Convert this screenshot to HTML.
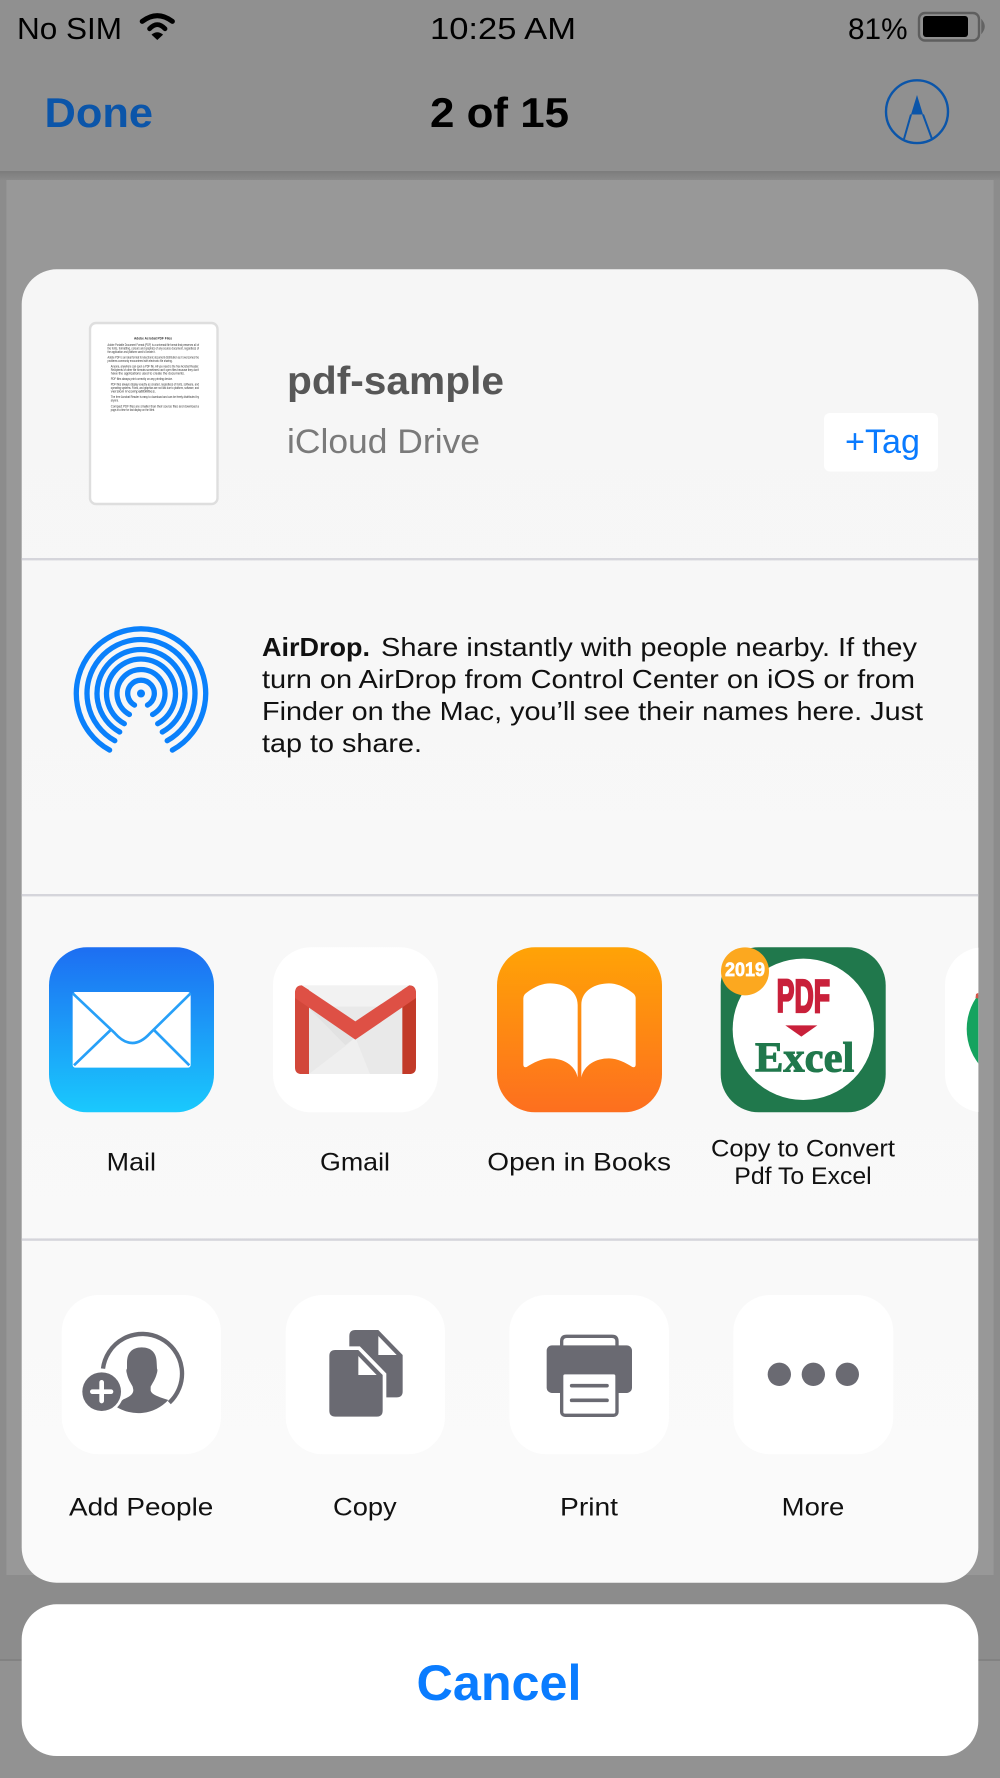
<!DOCTYPE html>
<html><head><meta charset="utf-8"><title>Share sheet</title>
<style>
html,body{margin:0;padding:0;background:#8c8c8c;width:1000px;height:1778px;overflow:hidden}
svg{display:block}
text{font-family:"Liberation Sans",sans-serif}
</style></head><body>
<svg width="1000" height="1778" viewBox="0 0 1000 1778" xmlns="http://www.w3.org/2000/svg">
<defs>
<linearGradient id="mailG" x1="0" y1="0" x2="0" y2="1"><stop offset="0" stop-color="#1d6ef2"/><stop offset="1" stop-color="#1ac9fd"/></linearGradient>
<linearGradient id="bookG" x1="0" y1="0" x2="0" y2="1"><stop offset="0" stop-color="#ffa306"/><stop offset="1" stop-color="#fd6f1f"/></linearGradient>
<linearGradient id="sheetG" x1="0" y1="0" x2="0" y2="1"><stop offset="0" stop-color="#f6f6f6"/><stop offset=".3" stop-color="#f7f7f7"/><stop offset="1" stop-color="#fafafa"/></linearGradient>
<linearGradient id="navS" x1="0" y1="0" x2="0" y2="1"><stop offset="0" stop-color="#7c7c7c"/><stop offset="1" stop-color="#8a8a8a"/></linearGradient>
<clipPath id="sheetClip"><rect x="21.7" y="269.3" width="956.6" height="1313.4" rx="35"/></clipPath>
</defs>

<!-- backdrop -->
<rect width="1000" height="1778" fill="#8c8c8c"/>
<rect width="1000" height="171" fill="#909090"/>
<rect y="171" width="1000" height="9" fill="url(#navS)"/>
<rect x="6.4" y="180" width="987.2" height="1395" fill="#989898"/>
<rect y="1660" width="1000" height="118" fill="#929292"/>
<rect y="1659" width="1000" height="2" fill="#828282"/>

<!-- status bar -->
<text x="17" y="39" font-size="30.5" fill="#000" textLength="105" lengthAdjust="spacingAndGlyphs">No SIM</text>
<path d="M142.2,21.4 Q157.3,10 172.4,21.4" fill="none" stroke="#000" stroke-width="5" stroke-linecap="round"/>
<path d="M149.6,28.8 Q157.3,20.5 165,28.8" fill="none" stroke="#000" stroke-width="4.8" stroke-linecap="round"/>
<path d="M151.5,34.6 Q157.3,29.8 163.1,34.6 L157.3,40 Z" fill="#000"/>
<text x="430" y="39" font-size="30.5" fill="#000" textLength="146" lengthAdjust="spacingAndGlyphs">10:25 AM</text>
<text x="848" y="39" font-size="30" fill="#000" textLength="59.5" lengthAdjust="spacingAndGlyphs">81%</text>
<rect x="919" y="13" width="60" height="27.5" rx="6" fill="none" stroke="#5e5e5e" stroke-width="2.4"/>
<rect x="923" y="16" width="45" height="21" rx="3" fill="#000"/>
<path d="M982,21 Q986,26.5 982,32 Z" fill="#636363" stroke="#636363" stroke-width="1.5"/>

<!-- nav bar -->
<text x="44.5" y="127" font-size="42" font-weight="bold" fill="#0b55a9" textLength="108.5" lengthAdjust="spacingAndGlyphs">Done</text>
<text x="430" y="127" font-size="42" font-weight="bold" fill="#000" textLength="139" lengthAdjust="spacingAndGlyphs">2 of 15</text>
<ellipse cx="917" cy="111.7" rx="31" ry="31.4" fill="none" stroke="#0b55a9" stroke-width="2.4"/>
<path d="M917,95 L923,114.5 H911 Z" fill="#0b55a9"/>
<path d="M911,114.5 L904,139 M923,114.5 L932,139" fill="none" stroke="#0b55a9" stroke-width="2"/>

<!-- share sheet -->
<rect x="21.7" y="269.3" width="956.6" height="1313.4" rx="35" fill="url(#sheetG)"/>
<rect x="21.7" y="558" width="956.6" height="2.4" fill="#d5d5db"/>
<rect x="21.7" y="894" width="956.6" height="2.4" fill="#d5d5db"/>
<rect x="21.7" y="1238.4" width="956.6" height="2.4" fill="#d5d5db"/>

<!-- PDF thumbnail -->
<rect x="90" y="323" width="127.5" height="181" rx="6" fill="#fff" stroke="#dedede" stroke-width="2.4"/>
<g fill="#333" font-size="3.3">
<text x="134" y="339.5" font-weight="bold" font-size="3.8" textLength="38" lengthAdjust="spacingAndGlyphs">Adobe Acrobat PDF Files</text>
<text x="107.5" y="346" textLength="91.5" lengthAdjust="spacingAndGlyphs">Adobe Portable Document Format (PDF) is a universal file format that preserves all of</text>
<text x="107.5" y="349.5" textLength="91.5" lengthAdjust="spacingAndGlyphs">the fonts, formatting, colours and graphics of any source document, regardless of</text>
<text x="107.5" y="353" textLength="48" lengthAdjust="spacingAndGlyphs">the application and platform used to create it.</text>
<text x="107.5" y="358.5" textLength="91.5" lengthAdjust="spacingAndGlyphs">Adobe PDF is an ideal format for electronic document distribution as it overcomes the</text>
<text x="107.5" y="362" textLength="65" lengthAdjust="spacingAndGlyphs">problems commonly encountered with electronic file sharing.</text>
<text x="110.8" y="367.5" textLength="88.2" lengthAdjust="spacingAndGlyphs">Anyone, anywhere can open a PDF file. All you need is the free Acrobat Reader.</text>
<text x="110.8" y="371" textLength="88.2" lengthAdjust="spacingAndGlyphs">Recipients of other file formats sometimes can't open files because they don't</text>
<text x="110.8" y="374.5" textLength="74" lengthAdjust="spacingAndGlyphs">have the applications used to create the documents.</text>
<text x="110.8" y="380" textLength="62" lengthAdjust="spacingAndGlyphs">PDF files always print correctly on any printing device.</text>
<text x="110.8" y="385.5" textLength="88.2" lengthAdjust="spacingAndGlyphs">PDF files always display exactly as created, regardless of fonts, software, and</text>
<text x="110.8" y="389" textLength="88.2" lengthAdjust="spacingAndGlyphs">operating systems. Fonts, and graphics are not lost due to platform, software, and</text>
<text x="110.8" y="392.5" textLength="45" lengthAdjust="spacingAndGlyphs">version incompatibilities.</text>
<text x="110.8" y="398" textLength="88.2" lengthAdjust="spacingAndGlyphs">The free Acrobat Reader is easy to download and can be freely distributed by</text>
<text x="110.8" y="401.5" textLength="8" lengthAdjust="spacingAndGlyphs">anyone.</text>
<text x="110.8" y="407.5" textLength="88.2" lengthAdjust="spacingAndGlyphs">Compact PDF files are smaller than their source files and download a</text>
<text x="110.8" y="411" textLength="44" lengthAdjust="spacingAndGlyphs">page at a time for fast display on the Web.</text>
</g>

<!-- file title -->
<text x="287" y="394" font-size="39" font-weight="bold" fill="#575757" textLength="217" lengthAdjust="spacingAndGlyphs">pdf-sample</text>
<text x="287" y="453" font-size="34.5" fill="#7a7a7a" textLength="193" lengthAdjust="spacingAndGlyphs">iCloud Drive</text>
<rect x="824" y="413" width="114" height="58.5" rx="6" fill="#fff"/>
<text x="845" y="453" font-size="34" fill="#0a7bff" textLength="75" lengthAdjust="spacingAndGlyphs">+Tag</text>

<!-- AirDrop icon -->
<g transform="translate(141,693.5)" fill="none" stroke="#0a80fb" stroke-width="5.3" stroke-linecap="round">
<path d="M-31.4,56.6 A64.7,64.7 0 1 1 31.4,56.6"/>
<path d="M-26.2,47.2 A54,54 0 1 1 26.2,47.2"/>
<path d="M-21.3,38.5 A44,44 0 1 1 21.3,38.5"/>
<path d="M-16.7,30.2 A34.5,34.5 0 1 1 16.7,30.2"/>
<path d="M-11.6,21 A24,24 0 1 1 11.6,21"/>
<path d="M-6.5,11.6 A13.3,13.3 0 1 1 6.5,11.6"/>
<circle cx="0" cy="0" r="4" fill="#0a80fb" stroke="none"/>
</g>

<!-- AirDrop text -->
<g font-size="26" fill="#111">
<text x="262" y="656" font-weight="bold" textLength="108" lengthAdjust="spacingAndGlyphs">AirDrop.</text>
<text x="381" y="656" textLength="536" lengthAdjust="spacingAndGlyphs">Share instantly with people nearby. If they</text>
<text x="262" y="688" textLength="653" lengthAdjust="spacingAndGlyphs">turn on AirDrop from Control Center on iOS or from</text>
<text x="262" y="720" textLength="661" lengthAdjust="spacingAndGlyphs">Finder on the Mac, you’ll see their names here. Just</text>
<text x="262" y="752" textLength="160" lengthAdjust="spacingAndGlyphs">tap to share.</text>
</g>

<!-- Mail -->
<rect x="49" y="947.3" width="165" height="165" rx="38" fill="url(#mailG)"/>
<g transform="translate(0,930) scale(.33333)">
<rect x="218" y="186" width="354" height="227" rx="8" fill="#fff"/>
<path d="M218,190 L345,310 Q397,368 450,310 L572,190 M222,406 L332,300 M568,406 L462,300" fill="none" stroke="#27a0f8" stroke-width="8"/>
</g>

<!-- Gmail -->
<rect x="273" y="947.3" width="165" height="165" rx="38" fill="#fff"/>
<g transform="translate(0,930) scale(.33333)">
<rect x="905" y="166" width="325" height="266" fill="#f2f2f2"/>
<path d="M927,230 L1207,230 V432 H927 Z" fill="#e9e9e9"/>
<path d="M927,432 L1040,345 L1066,322 L1110,432 Z" fill="#efefef"/>
<path d="M927,235 L1036,345 L1066,322 L1000,270 Z" fill="#e2e2e2"/>
<path d="M885,190 Q885,166 905,166 L927,180 V432 H905 Q885,432 885,412 Z" fill="#d2473a"/>
<path d="M1248,190 Q1248,166 1228,166 L1207,180 V432 H1228 Q1248,432 1248,412 Z" fill="#c23a28"/>
<path d="M885,186 Q888,168 905,166 L1066,274 L1228,166 Q1245,168 1248,186 V204 L1066,329 L885,204 Z" fill="#de5045"/>
</g>

<!-- Books -->
<rect x="497" y="947.3" width="165" height="165" rx="38" fill="url(#bookG)"/>
<g transform="translate(480,930) scale(.33333)" fill="#fff">
<path d="M130,205 Q130,195 140,188 C165,168 190,160 210,160 C250,160 293,180 293,225 V442 C285,405 250,385 210,385 C185,385 160,398 140,411 Q130,414 130,404 Z"/>
<path d="M467,205 Q467,195 457,188 C432,168 407,160 387,160 C347,160 304,180 304,225 V442 C312,405 347,385 387,385 C412,385 437,398 457,411 Q467,414 467,404 Z"/>
</g>

<!-- PDF to Excel -->
<rect x="720.7" y="947.3" width="165" height="165" rx="38" fill="#20784c"/>
<g transform="translate(480,930) scale(.33333)">
<circle cx="970" cy="298" r="212" fill="#fff"/>
<circle cx="795" cy="124" r="72" fill="#fca81f"/>
<text x="735" y="138" font-size="58" font-weight="bold" fill="#fff" stroke="#fff" stroke-width="2" textLength="120" lengthAdjust="spacingAndGlyphs">2019</text>
<text x="890" y="246" font-size="140" font-weight="bold" fill="#c9203a" stroke="#c9203a" stroke-width="7" textLength="160" lengthAdjust="spacingAndGlyphs">PDF</text>
<path d="M916,286 H1012 L964,320 Z" fill="#c9203a"/>
<text x="825" y="425" font-size="126" font-weight="bold" fill="#20784c" stroke="#20784c" stroke-width="3" textLength="298" lengthAdjust="spacingAndGlyphs" style="font-family:'Liberation Serif',serif">Excel</text>
</g>

<!-- next partial icon -->
<g clip-path="url(#sheetClip)">
<rect x="945" y="947.3" width="165" height="165" rx="38" fill="#fff"/>
<circle cx="1023.5" cy="1029" r="56.8" fill="#15a35f"/>
<path d="M976,994 L980,992 L980,999 L975.5,998 Z" fill="#d4554a"/>
</g>

<!-- app labels -->
<g font-size="25" fill="#111">
<text x="106.7" y="1170.7" textLength="49.3" lengthAdjust="spacingAndGlyphs">Mail</text>
<text x="320" y="1170.7" textLength="70" lengthAdjust="spacingAndGlyphs">Gmail</text>
<text x="487.3" y="1170.7" textLength="183.7" lengthAdjust="spacingAndGlyphs">Open in Books</text>
<text x="711" y="1156.7" textLength="184" lengthAdjust="spacingAndGlyphs" font-size="24">Copy to Convert</text>
<text x="734.3" y="1184" textLength="137.4" lengthAdjust="spacingAndGlyphs" font-size="24">Pdf To Excel</text>
</g>

<!-- action tiles -->
<rect x="61.7" y="1295" width="159.3" height="159.3" rx="37" fill="#fff"/>
<rect x="285.7" y="1295" width="159.3" height="159.3" rx="37" fill="#fff"/>
<rect x="509.3" y="1295" width="159.7" height="159.3" rx="37" fill="#fff"/>
<rect x="733.3" y="1295" width="160" height="159.3" rx="37" fill="#fff"/>

<!-- Add People -->
<g transform="translate(0,1270) scale(.33333)">
<path d="M309,296 A119,119 0 1 1 508,398" fill="none" stroke="#6a6a72" stroke-width="13"/>
<path d="M425,232 C455,232 470,250 470,278 L471,296 Q474,300 470,312 C466,328 458,338 452,350 L452,362 C455,375 480,382 505,390 A124,124 0 0 1 345,408 L370,388 C390,380 400,372 400,360 L398,350 C392,338 384,328 381,312 Q377,300 381,296 L381,278 C381,250 395,232 425,232 Z" fill="#6a6a72"/>
<circle cx="305" cy="365" r="66" fill="#fff"/>
<circle cx="305" cy="365" r="58" fill="#6a6a72"/>
<path d="M305,337 V393 M277,365 H333" stroke="#fff" stroke-width="14" stroke-linecap="round" fill="none"/>
</g>

<!-- Copy -->
<g transform="translate(0,1270) scale(.33333)">
<path d="M1066,180 H1135 L1208,255 V364 Q1208,382 1190,382 H1066 Q1048,382 1048,364 V198 Q1048,180 1066,180 Z" fill="#6a6a72"/>
<path d="M1135,198 V255 H1190 Z" fill="#fff"/>
<path d="M1006,240 H1075 L1148,315 V422 Q1148,440 1130,440 H1006 Q988,440 988,422 V258 Q988,240 1006,240 Z" fill="#6a6a72" stroke="#fff" stroke-width="22" paint-order="stroke"/>
<path d="M1075,258 V315 H1130 Z" fill="#fff"/>
</g>

<!-- Print -->
<g transform="translate(480,1270) scale(.33333)">
<path d="M245,228 V214 Q245,199 260,199 H396 Q411,199 411,214 V228" fill="none" stroke="#6a6a72" stroke-width="10"/>
<rect x="200" y="226" width="256" height="143" rx="16" fill="#6a6a72"/>
<rect x="245" y="308" width="166" height="128" rx="10" fill="#fff" stroke="#6a6a72" stroke-width="10"/>
<path d="M275,347 H381 M275,391 H381" stroke="#6a6a72" stroke-width="11" stroke-linecap="round" fill="none"/>
<circle cx="898" cy="313" r="35" fill="#6a6a72"/>
<circle cx="1000" cy="313" r="35" fill="#6a6a72"/>
<circle cx="1102" cy="313" r="35" fill="#6a6a72"/>
</g>

<!-- action labels -->
<g font-size="25" fill="#111">
<text x="69" y="1515.7" textLength="144.3" lengthAdjust="spacingAndGlyphs">Add People</text>
<text x="333" y="1515.7" textLength="63.7" lengthAdjust="spacingAndGlyphs">Copy</text>
<text x="560" y="1515.7" textLength="58" lengthAdjust="spacingAndGlyphs">Print</text>
<text x="781.7" y="1515.7" textLength="62.6" lengthAdjust="spacingAndGlyphs">More</text>
</g>

<!-- Cancel -->
<rect x="21.7" y="1604.3" width="956.6" height="151.7" rx="35" fill="#fff"/>
<text x="416.5" y="1700" font-size="50" font-weight="bold" fill="#0a7cff" textLength="165" lengthAdjust="spacingAndGlyphs">Cancel</text>
</svg>
</body></html>
